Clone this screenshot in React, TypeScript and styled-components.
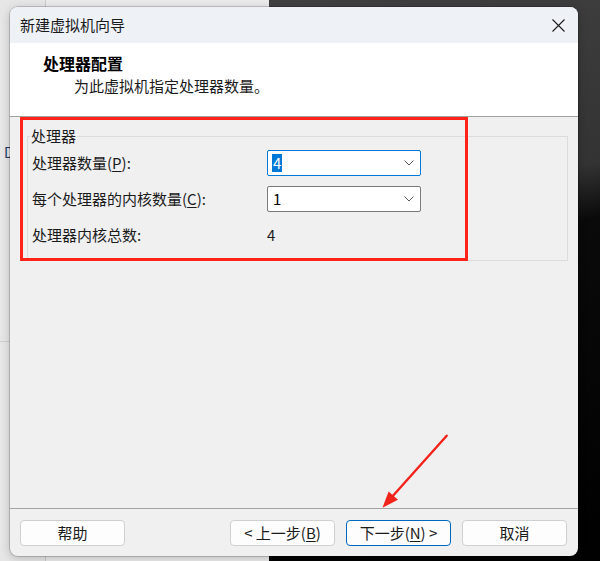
import React from 'react';
import styled, { createGlobalStyle } from 'styled-components';

const GlobalStyle = createGlobalStyle`
  *, *::before, *::after {
    box-sizing: border-box;
  }
  html, body {
    margin: 0;
    padding: 0;
  }
  body {
    font-family: "Noto Sans CJK SC", "Noto Sans", sans-serif;
    color: #1b1b1b;
  }
`;

const Desktop = styled.div`
  position: relative;
  width: 600px;
  height: 561px;
  overflow: hidden;
  background:
    linear-gradient(to right, #e6e6e6 0, #e6e6e6 45px, #cbcbcb 45px, #cbcbcb 46px, #ebebeb 46px, #ebebeb 269px, transparent 269px),
    linear-gradient(168deg, #444 0%, #333 42%, #0a0a0a 50%, #000 100%);
`;

// window behind the dialog
const BackLabel = styled.span`
  position: absolute;
  left: 4px;
  top: 143px;
  font-size: 14px;
  line-height: 18px;
  color: #1e3a66;
`;

const BackRule = styled.div`
  position: absolute;
  left: 0;
  top: 341px;
  width: 12px;
  height: 1px;
  background: #cfcfcf;
`;

const Dialog = styled.div`
  position: absolute;
  left: 10px;
  top: 7px;
  width: 568px;
  height: 549px;
  border-radius: 8px;
  background: #f0f0f0;
  box-shadow: 0 0 0 1px rgba(0, 0, 0, 0.16), 0 2px 10px rgba(0, 0, 0, 0.22);
  overflow: hidden;
  display: flex;
  flex-direction: column;
`;

const TitleBar = styled.div`
  height: 36px;
  flex-shrink: 0;
  display: flex;
  align-items: center;
  padding-left: 10px;
  background: #eef2f7;
  font-size: 15px;
  line-height: 20px;
`;

const CloseButton = styled.div`
  margin-left: auto;
  width: 40px;
  height: 36px;
  display: flex;
  align-items: center;
  justify-content: center;
`;

const Header = styled.div`
  height: 74px;
  flex-shrink: 0;
  background: #fff;
  border-bottom: 1px solid #a0a0a0;
  padding: 9px 0 0 33px;
`;

const Heading = styled.div`
  font-size: 16px;
  font-weight: 700;
  line-height: 22px;
  color: #000;
`;

const Subtitle = styled.div`
  margin: 1px 0 0 31px;
  font-size: 15px;
  line-height: 22px;
  color: #1b1b1b;
`;

const Body = styled.div`
  flex: 1;
  padding: 19px 10px 0 17px;
`;

const GroupBox = styled.div`
  height: 125px;
  border: 1px solid #dcdcdc;
  padding: 0 0 0 4px;
`;

const GroupTitle = styled.div`
  width: fit-content;
  margin: -11px 0 0 -2px;
  padding: 0 1px;
  background: #f0f0f0;
  font-size: 15px;
  line-height: 20px;
`;

const Grid = styled.div`
  margin-top: 4px;
  display: grid;
  grid-template-columns: 235px 154px;
  grid-auto-rows: 26px;
  row-gap: 10px;
  align-items: center;
  font-size: 15px;
  line-height: 20px;
`;

const Label = styled.div`
  white-space: nowrap;
`;

const Key = styled.span`
  text-decoration: underline;
  text-underline-offset: 2px;
`;

const Combo = styled.div<{ $focused?: boolean }>`
  height: 26px;
  display: flex;
  align-items: center;
  padding: 0 6px 0 4px;
  background: #fff;
  border: 1px solid ${(p) => (p.$focused ? '#0078d7' : '#7a7a7a')};
  border-radius: 2px;
  font-size: 15px;
`;

const ComboText = styled.span<{ $selected?: boolean }>`
  line-height: 18px;
  padding: 0 1px;
  background: ${(p) => (p.$selected ? '#0078d7' : 'transparent')};
  color: ${(p) => (p.$selected ? '#fff' : '#000')};
`;

const Chevron = styled.svg`
  margin-left: auto;
`;

const Value = styled.div`
  color: #1b1b1b;
`;

const Footer = styled.div`
  height: 48px;
  flex-shrink: 0;
  border-top: 1px solid #a4a4a4;
  display: flex;
  gap: 11px;
  padding: 11px 11px 0 10px;
`;

const Button = styled.div<{ $primary?: boolean }>`
  width: 105px;
  height: 26px;
  display: flex;
  align-items: center;
  justify-content: center;
  background: #fdfdfd;
  border: 1px solid ${(p) => (p.$primary ? '#0067c0' : '#d0d0d0')};
  border-radius: 4px;
  font-size: 15px;
  line-height: 20px;
  white-space: pre;
`;

const Spacer = styled.div`
  flex: 1;
`;

const Highlight = styled.div`
  position: absolute;
  left: 20px;
  top: 117px;
  width: 448px;
  height: 144px;
  border: 3px solid #ff2218;
  pointer-events: none;
`;

const Overlay = styled.svg`
  position: absolute;
  left: 0;
  top: 0;
  pointer-events: none;
`;

const ChevronIcon = () => (
  <Chevron width="10" height="6" viewBox="0 0 10 6">
    <polyline points="0.5,0.5 5,5 9.5,0.5" fill="none" stroke="#5a5a5a" strokeWidth="1" />
  </Chevron>
);

export default function App() {
  return (
    <Desktop>
      <GlobalStyle />
      <BackLabel>D</BackLabel>
      <BackRule />
      <Dialog>
        <TitleBar>
          新建虚拟机向导
          <CloseButton>
            <svg width="13" height="13" viewBox="0 0 13 13">
              <path d="M0.5 0.5 L12.5 12.5 M12.5 0.5 L0.5 12.5" stroke="#1b1b1b" strokeWidth="1.1" />
            </svg>
          </CloseButton>
        </TitleBar>
        <Header>
          <Heading>处理器配置</Heading>
          <Subtitle>为此虚拟机指定处理器数量。</Subtitle>
        </Header>
        <Body>
          <GroupBox>
            <GroupTitle>处理器</GroupTitle>
            <Grid>
              <Label>
                处理器数量(<Key>P</Key>):
              </Label>
              <Combo $focused>
                <ComboText $selected>4</ComboText>
                <ChevronIcon />
              </Combo>
              <Label>
                每个处理器的内核数量(<Key>C</Key>):
              </Label>
              <Combo>
                <ComboText>1</ComboText>
                <ChevronIcon />
              </Combo>
              <Label>处理器内核总数:</Label>
              <Value>4</Value>
            </Grid>
          </GroupBox>
        </Body>
        <Footer>
          <Button>帮助</Button>
          <Spacer />
          <Button>
            {'< 上一步('}
            <Key>B</Key>)
          </Button>
          <Button $primary>
            下一步(<Key>N</Key>
            {') >'}
          </Button>
          <Button>取消</Button>
        </Footer>
      </Dialog>
      <Highlight />
      <Overlay width="600" height="561" viewBox="0 0 600 561">
        <line x1="446.7" y1="435.7" x2="393" y2="495.8" stroke="#f2231b" strokeWidth="2.4" strokeLinecap="round" />
        <polygon points="382.5,507.8 398,499.8 388.6,491.4" fill="#f2231b" />
      </Overlay>
    </Desktop>
  );
}
